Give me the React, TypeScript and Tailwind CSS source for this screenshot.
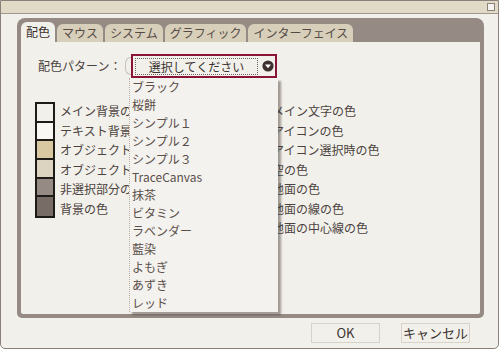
import React from 'react';

const tabs = ['配色', 'マウス', 'システム', 'グラフィック', 'インターフェイス'];

const patterns = [
  'ブラック',
  '桜餅',
  'シンプル１',
  'シンプル２',
  'シンプル３',
  'TraceCanvas',
  '抹茶',
  'ビタミン',
  'ラベンダー',
  '藍染',
  'よもぎ',
  'あずき',
  'レッド',
];

const leftItems = [
  { label: 'メイン背景の色', color: 'bg-[#f2f0ea]' },
  { label: 'テキスト背景の色', color: 'bg-[#f8f7f4]' },
  { label: 'オブジェクトの色', color: 'bg-[#d9c9a2]' },
  { label: 'オブジェクト枠の色', color: 'bg-[#dcd3c0]' },
  { label: '非選択部分の色', color: 'bg-[#968a84]' },
  { label: '背景の色', color: 'bg-[#786c66]' },
];

const rightItems = [
  'メイン文字の色',
  'アイコンの色',
  'アイコン選択時の色',
  '空の色',
  '地面の色',
  '地面の線の色',
  '地面の中心線の色',
];

const ArrowIcon: React.FC = () => (
  <svg width="12" height="12" viewBox="0 0 12 12">
    <circle cx="6" cy="6" r="5.6" fill="#3f322e" />
    <path d="M3 4.6 L9 4.6 L6 8.2 Z" fill="#ffffff" />
  </svg>
);

const App: React.FC = () => {
  return (
    <div className="w-[500px] h-[350px] bg-white">
      <div className="w-[499px] h-[349px] flex flex-col border border-[#8b817b] rounded-b-[5px] bg-[#f2f0ea] overflow-hidden text-[12px] text-[#4b4340] font-['Noto_Sans_CJK_JP',sans-serif]">
        {/* title bar */}
        <div className="h-[13px] shrink-0 bg-[#e1dac6] border-b border-[#a0978f] flex justify-end items-center pr-[3px]">
          <div className="w-[8px] h-[8px] border border-[#8b817b] bg-[#f5f3ee]" />
        </div>

        <div className="flex-1 flex flex-col pl-[16px] pr-[14px] pt-[4px]">
          {/* tab frame */}
          <div className="h-[300px] flex flex-col bg-[#958a84] rounded-t-[8px] rounded-b-[5px] px-[4px] pb-[4px]">
            <div className="h-[24px] flex items-end gap-[2px]">
              {tabs.map((t, i) => (
                <div
                  key={t}
                  className={
                    i === 0
                      ? 'h-[20px] px-[5px] bg-[#f2f0ea] rounded-t-[6px] leading-[20px] text-[#3b3330]'
                      : 'h-[18px] px-[5px] bg-[#d8cfbb] rounded-t-[6px] leading-[18px] text-[#554b46]'
                  }
                >
                  {t}
                </div>
              ))}
            </div>

            <div className="flex-1 relative bg-[#f2f0ea] rounded-b-[2px]">
              {/* pattern select row */}
              <div className="flex items-center h-[24px] mt-[12px] ml-[17px]">
                <div className="w-[93px]">配色パターン：</div>
                <div className="relative">
                  <div className="absolute -left-[6px] top-[3px] w-[10px] h-[18px] border-l border-y border-[#c9c1b9] rounded-l-[6px]" />
                  <div className="relative w-[146px] h-[24px] border-2 border-[#8a1538] bg-[#f2f0ea] flex items-center pl-[2px] pr-[1px]">
                    <div className="w-[123px] h-[17px] border border-dotted border-[#6e6460] text-center leading-[15px] text-[#3b3330]">
                      選択してください
                    </div>
                    <div className="ml-auto flex items-center">
                      <ArrowIcon />
                    </div>
                  </div>
                </div>
              </div>

              {/* colour rows */}
              <div className="flex mt-[23px] ml-[14px]">
                <div className="w-[237px] flex">
                  <div className="w-[20px] h-[116px] mt-[1px] border-2 border-[#1e1a18] flex flex-col divide-y-2 divide-[#1e1a18]">
                    {leftItems.map((it) => (
                      <div key={it.label} className={`h-[19px] ${it.color}`} />
                    ))}
                  </div>
                  <div className="ml-[5px] flex flex-col">
                    {leftItems.map((it) => (
                      <div key={it.label} className="h-[19.5px] leading-[19.5px] whitespace-nowrap">
                        {it.label}
                      </div>
                    ))}
                  </div>
                </div>
                <div className="flex flex-col">
                  {rightItems.map((t) => (
                    <div key={t} className="h-[19.5px] leading-[19.5px] whitespace-nowrap">
                      {t}
                    </div>
                  ))}
                </div>
              </div>

              {/* open dropdown list, lies over the colour rows */}
              <div className="absolute z-10 left-[108px] top-[36px] w-[149px] bg-[#f4f2ee] border-l border-dotted border-[#b5ada5] shadow-[3px_3px_2px_rgba(60,50,45,0.45)]">
                {patterns.map((p) => (
                  <div key={p} className="h-[18px] leading-[18px] pl-[2px] text-[#5a4f4a]">
                    {p}
                  </div>
                ))}
              </div>
            </div>
          </div>

          {/* buttons */}
          <div className="flex justify-end gap-[21px] pr-[14px] mt-[5px]">
            <div className="w-[69px] h-[20px] border border-[#d8d2c8] text-center leading-[18px] text-[13px] text-[#3b3330]">
              OK
            </div>
            <div className="w-[69px] h-[20px] border border-[#d8d2c8] text-center leading-[18px] text-[13px] text-[#3b3330]">
              キャンセル
            </div>
          </div>
        </div>
      </div>
    </div>
  );
};

export default App;
